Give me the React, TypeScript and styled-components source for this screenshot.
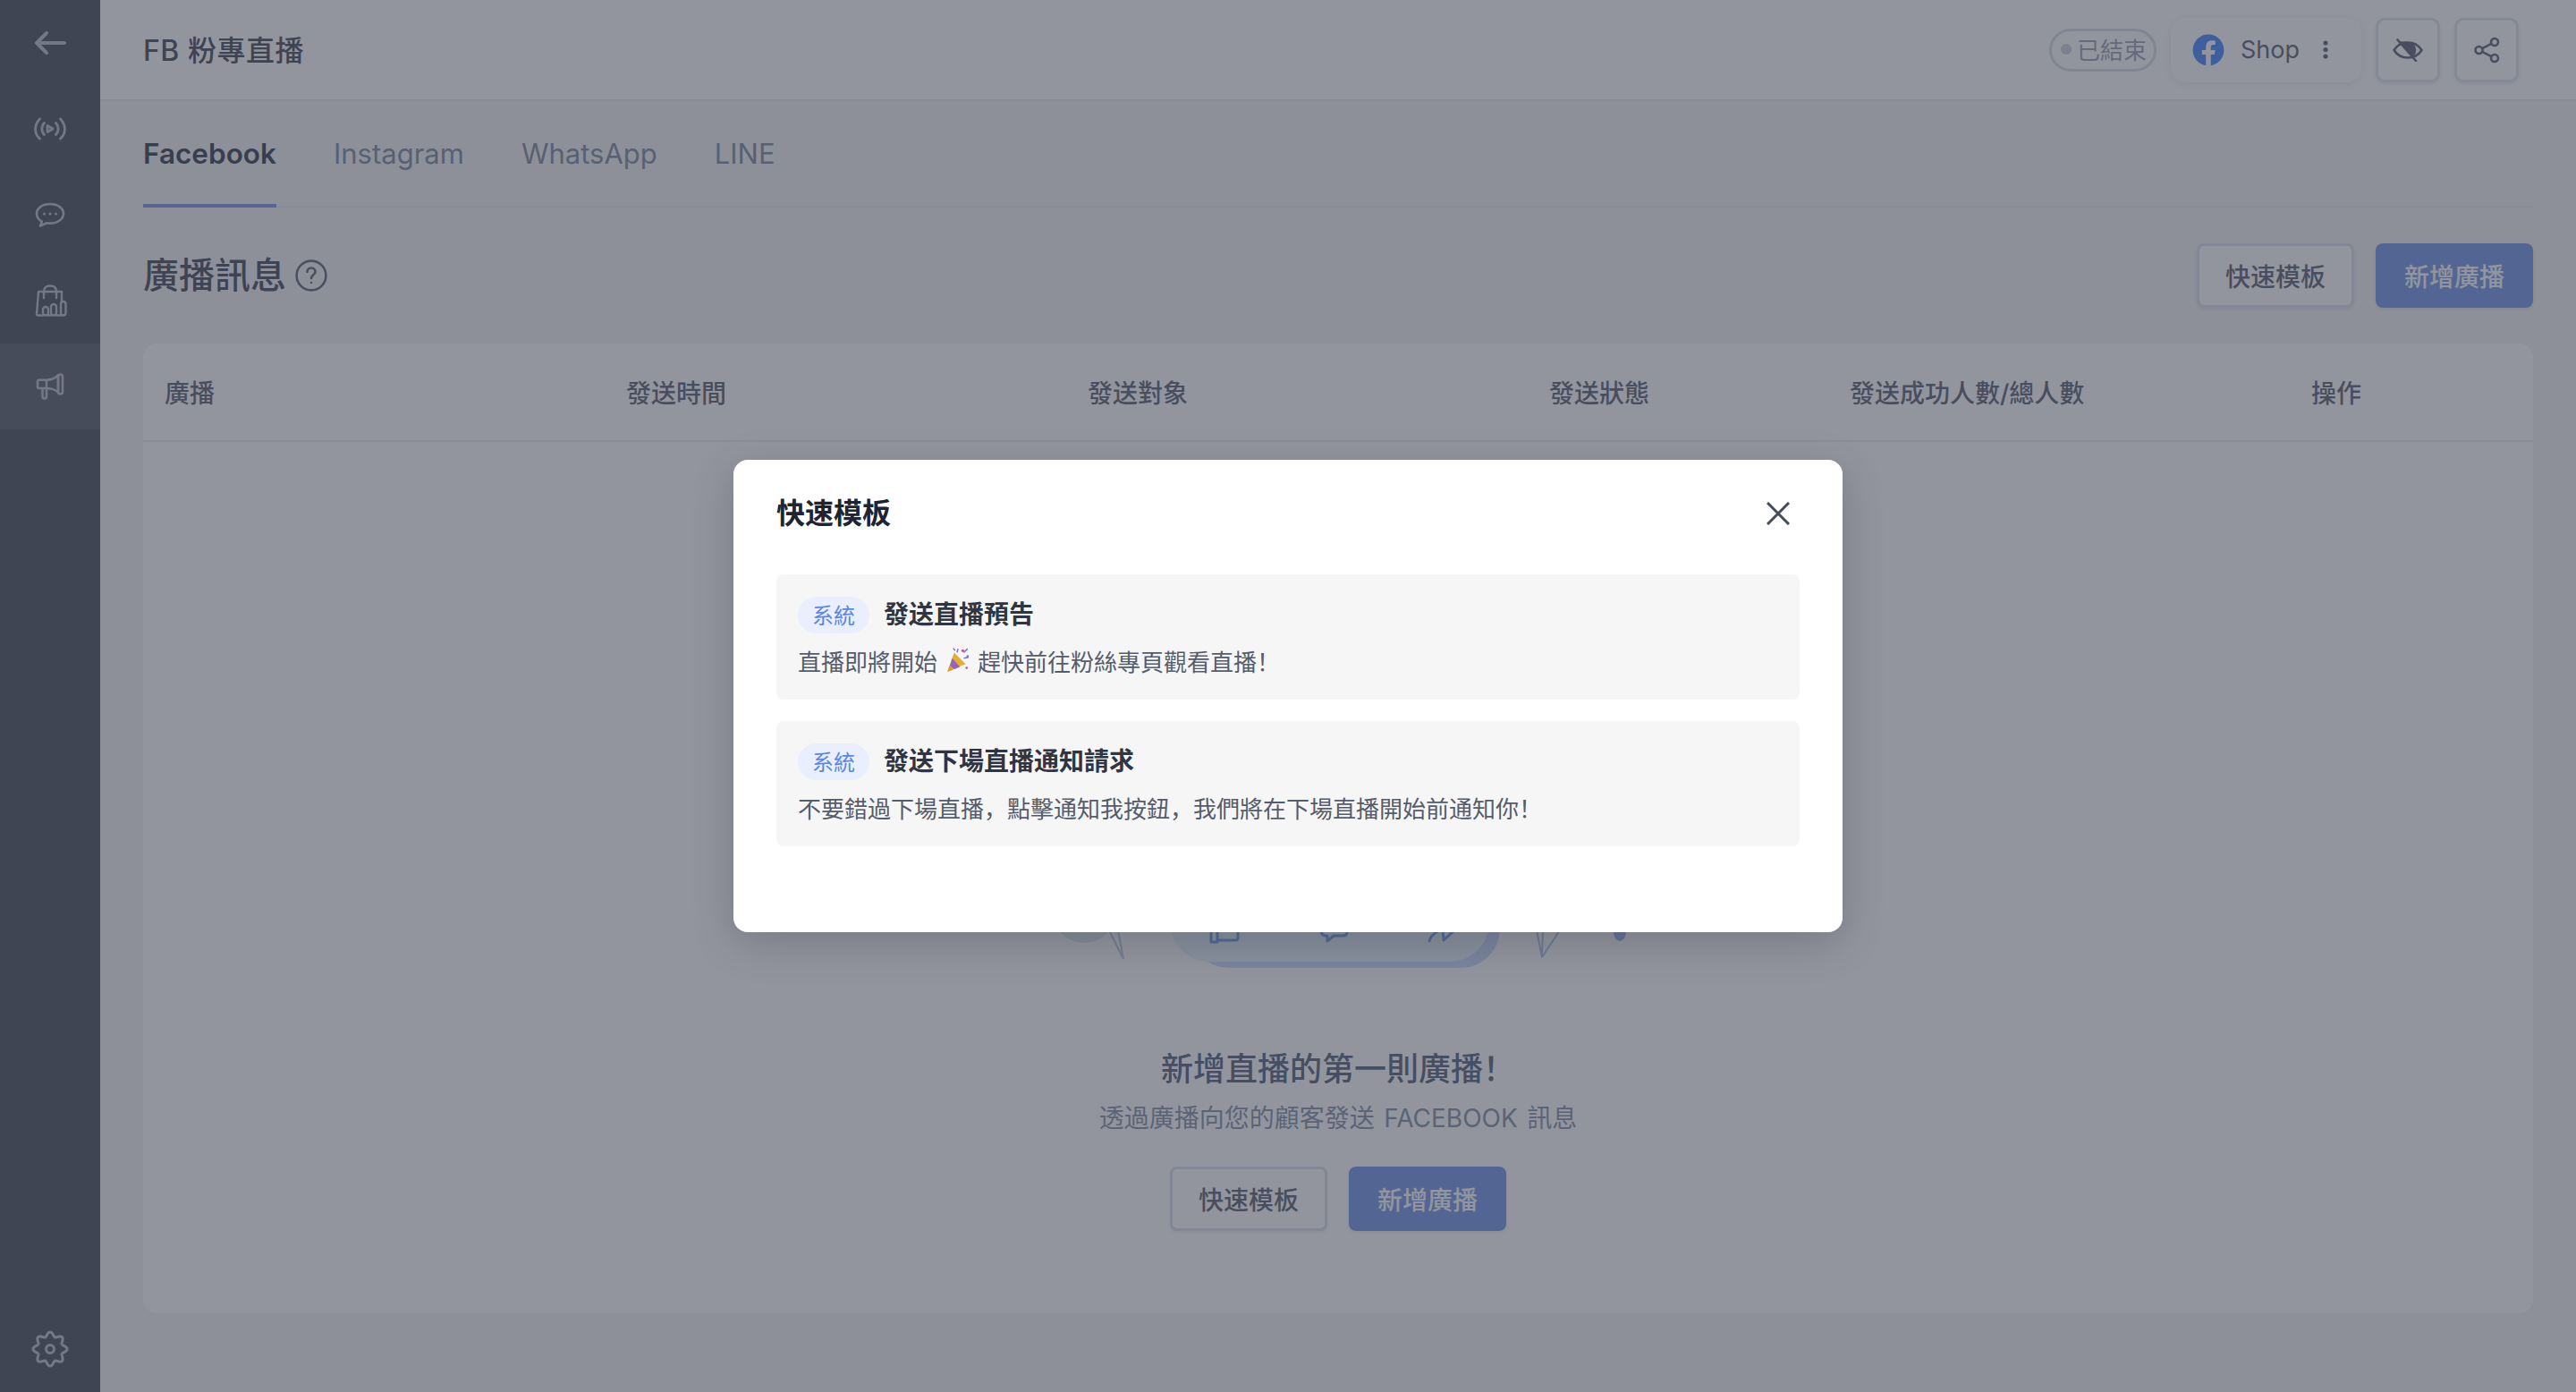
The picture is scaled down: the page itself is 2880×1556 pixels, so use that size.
import React from "react";
import styled, { createGlobalStyle } from "styled-components";
import { FaFacebook } from "react-icons/fa";

const Global = createGlobalStyle`
  html, body { margin: 0; padding: 0; width: 2880px; height: 1556px; overflow: hidden; }
  body { font-family: Inter, "Noto Sans CJK SC", "Noto Sans CJK TC", sans-serif; background: #f5f5f5; }
  * { box-sizing: border-box; }
`;

const Shell = styled.div`
  display: flex;
  width: 2880px;
  height: 1556px;
  position: relative;
`;
const Sidebar = styled.nav`
  width: 112px;
  flex: none;
  background: #5b5f69;
  display: flex;
  flex-direction: column;
`;
const NavItem = styled.div<{ $active?: boolean; $bottom?: boolean }>`
  height: 96px;
  display: flex;
  align-items: center;
  justify-content: center;
  background: ${(p) => (p.$active ? "#696d77" : "transparent")};
  margin-top: ${(p) => (p.$bottom ? "auto" : "0")};
  color: #c1c5d1;
`;
const Main = styled.div`
  flex: 1;
  display: flex;
  flex-direction: column;
  min-width: 0;
`;
const Header = styled.header`
  height: 113px;
  flex: none;
  background: #fff;
  border-bottom: 2px solid #eceef3;
  padding: 0 64px 0 48px;
  display: flex;
  align-items: center;
  justify-content: space-between;
`;
const PageTitle = styled.h1`
  margin: 0 0 3px;
  font-size: 32px;
  font-weight: 500;
  letter-spacing: 0.5px;
  color: #575d6b;
`;
const HeaderActions = styled.div`
  display: flex;
  align-items: center;
  gap: 16px;
`;
const StatusPill = styled.div`
  width: 120px;
  height: 48px;
  border: 3px solid #dcdfe7;
  border-radius: 24px;
  display: flex;
  align-items: center;
  justify-content: flex-start;
  gap: 6px;
  padding: 0 0 2px 10px;
  font-size: 26px;
  color: #a3a9b8;
`;
const StatusDot = styled.span`
  width: 12px;
  height: 12px;
  border-radius: 50%;
  background: #d3d7e0;
`;
const ShopCard = styled.div`
  width: 213px;
  height: 72px;
  border-radius: 16px;
  background: #fff;
  box-shadow: 0 2px 10px rgba(60, 70, 100, 0.1);
  display: flex;
  align-items: center;
  padding-left: 24px;
  color: #6b7180;
  font-size: 27px;
`;
const ShopName = styled.span`
  margin-left: 18px;
  margin-right: 26px;
`;
const SquareButton = styled.button`
  width: 72px;
  height: 72px;
  border: 3px solid #e4e6ee;
  border-radius: 10px;
  background: #fff;
  display: flex;
  align-items: center;
  justify-content: center;
  padding: 0;
  box-shadow: 0 2px 4px rgba(60, 70, 100, 0.1);
`;
const Content = styled.div`
  padding: 0 48px;
  display: flex;
  flex-direction: column;
`;
const Tabs = styled.div`
  height: 119px;
  display: flex;
  gap: 64px;
  border-bottom: 2px solid #eaecf1;
  margin-bottom: 40px;
`;
const Tab = styled.div<{ $active?: boolean }>`
  height: 119px;
  display: flex;
  align-items: center;
  font-size: ${(p) => (p.$active ? "31.5px" : "31px")};
  font-weight: ${(p) => (p.$active ? 600 : 400)};
  color: ${(p) => (p.$active ? "#4b515f" : "#8b95a9")};
  border-bottom: 4px solid ${(p) => (p.$active ? "#81a1e9" : "transparent")};
  padding-top: 2px;
`;
const SectionRow = styled.div`
  height: 72px;
  display: flex;
  align-items: center;
  justify-content: space-between;
  margin-bottom: 40px;
`;
const SectionTitle = styled.h2`
  margin: 0;
  display: flex;
  align-items: center;
  gap: 10px;
  font-size: 40px;
  line-height: 48px;
  padding-bottom: 1px;
  font-weight: 500;
  color: #575d6b;
`;
const ButtonGroup = styled.div`
  display: flex;
  gap: 24px;
`;
const Button = styled.button<{ $primary?: boolean }>`
  width: 176px;
  height: 72px;
  padding: 0 0 1px;
  border-radius: 8px;
  font-family: inherit;
  font-size: 28px;
  font-weight: 500;
  border: ${(p) => (p.$primary ? "none" : "3px solid #e0e3ec")};
  background: ${(p) => (p.$primary ? "#81a1e9" : "#fff")};
  color: ${(p) => (p.$primary ? "#fff" : "#6b7180")};
  box-shadow: 0 2px 4px rgba(60, 70, 100, 0.1);
`;
const TableCard = styled.section`
  height: 1084px;
  background: #fff;
  border-radius: 16px;
  display: flex;
  flex-direction: column;
  align-items: stretch;
`;
const TableHead = styled.div`
  height: 110px;
  border-bottom: 2px solid #eceef3;
  padding: 0 0 1px 24px;
  display: grid;
  grid-template-columns: 516px 516px 516px 336px 516px 1fr;
  align-items: center;
  font-size: 28px;
  font-weight: 500;
  color: #6b7180;
`;
const EmptyBody = styled.div`
  display: flex;
  flex-direction: column;
  align-items: center;
  padding-top: 228px;
`;
const Art = styled.svg`
  display: block;
  width: 660px;
  height: 360px;
  margin-left: 20px;
`;
const EmptyTitle = styled.div`
  margin-top: 89px;
  font-size: 36px;
  line-height: 48px;
  font-weight: 500;
  color: #657087;
`;
const EmptySub = styled.div`
  margin-top: 11px;
  font-size: 28px;
  line-height: 40px;
  word-spacing: 2.5px;
  color: #919bb0;
`;
const EmptyActions = styled(ButtonGroup)`
  margin-top: 34px;
`;
const Backdrop = styled.div`
  position: absolute;
  inset: 0;
  background: rgba(37, 43, 61, 0.5);
  display: flex;
  align-items: center;
  justify-content: center;
`;
const Modal = styled.div`
  width: 1240px;
  height: 528px;
  background: #fff;
  border-radius: 16px;
  padding: 0 48px;
  box-shadow: 0 12px 48px rgba(0, 0, 0, 0.18);
`;
const ModalHead = styled.div`
  height: 128px;
  display: flex;
  align-items: center;
  justify-content: space-between;
  padding: 0 11px 9px 0;
`;
const ModalTitle = styled.h3`
  margin: 0 0 5px;
  font-size: 32px;
  font-weight: 600;
  color: #1f2430;
`;
const TemplateList = styled.div`
  display: flex;
  flex-direction: column;
  gap: 24px;
`;
const TemplateItem = styled.div`
  height: 140px;
  background: #f6f6f7;
  border-radius: 8px;
  padding: 25px 24px 0;
`;
const TemplateHead = styled.div`
  display: flex;
  align-items: center;
  gap: 16px;
  height: 41px;
`;
const SystemTag = styled.span`
  width: 80px;
  height: 41px;
  border-radius: 21px;
  background: #e9effe;
  color: #5b85e8;
  font-size: 24px;
  padding-bottom: 2px;
  display: flex;
  align-items: center;
  justify-content: center;
`;
const TemplateName = styled.span`
  font-size: 28px;
  font-weight: 600;
  color: #2f3542;
  padding-bottom: 5px;
`;
const TemplateText = styled.div`
  margin-top: 12px;
  height: 36px;
  display: flex;
  align-items: center;
  font-size: 26px;
  color: #555c6b;
  white-space: pre;
`;

const BackIcon = () => (
  <svg width="36" height="26" viewBox="0 0 36 26" fill="none" stroke="currentColor" strokeWidth="4" strokeLinecap="round" strokeLinejoin="round">
    <path d="M34 13H3M14 2 3 13l11 11" />
  </svg>
);
const LiveIcon = () => (
  <svg width="36" height="26" viewBox="0 0 36 26" fill="none" stroke="currentColor" strokeWidth="2.8" strokeLinecap="round" strokeLinejoin="round">
    <path d="M6.5 2C.5 8-.5 18 6.5 24M29.5 2c6 6 7 16 0 22M11.5 6.5c-3.5 3.500-3.500 9.500 0 13M24.500 6.500c3.500 3.500 3.500 9.500 0 13" />
    <path d="M15 9.500v7l6-3.500z" />
  </svg>
);
const ChatIcon = () => (
  <svg width="34" height="29" viewBox="0 0 34 29" fill="none" stroke="currentColor" strokeWidth="2.6" strokeLinecap="round" strokeLinejoin="round">
    <path d="M17 2C8.700 2 2 6.700 2 12.800c0 4 2.900 7.200 5.800 8.900L6 26.500l7.500-3.200c1 .2 2.300.3 3.500.3 8.300 0 15-4.700 15-10.800S25.300 2 17 2z" />
    <circle cx="10.500" cy="13" r="1.500" fill="currentColor" stroke="none" />
    <circle cx="17" cy="13" r="1.500" fill="currentColor" stroke="none" />
    <circle cx="23.500" cy="13" r="1.500" fill="currentColor" stroke="none" />
  </svg>
);
const BagIcon = () => (
  <svg width="38" height="36" viewBox="0 0 38 36" fill="none" stroke="currentColor" strokeWidth="2.400" strokeLinecap="round" strokeLinejoin="round">
    <path d="M12 15V7.500C12 3.500 15 1.500 19 1.500S26 3.500 26 7.500V15" />
    <path d="M32 18V8H6L4 33c0 1 .5 1.500 1.500 1.500H11" />
    <rect x="11" y="25" width="6" height="9.500" rx="3" />
    <rect x="20" y="22" width="6" height="12.500" rx="3" />
    <rect x="31" y="19" width="5.500" height="15.500" rx="2.750" />
    <path d="M17 34.500h3M26 34.500h5" />
  </svg>
);
const MegaphoneIcon = () => (
  <svg width="32" height="30" viewBox="0 0 32 30" fill="none" stroke="currentColor" strokeWidth="2.600" strokeLinecap="round" strokeLinejoin="round">
    <path d="M2 9.500c0-1 .8-1.800 1.800-1.800H12c5 0 10-2.400 13-5.200v19c-3-2.500-8-4.500-13-4.500H3.800c-1 0-1.800-.8-1.800-1.800z" />
    <rect x="25" y="1.500" width="5" height="22" rx="2.500" />
    <path d="M12 8v9M7.500 17.500V26c0 1.500 1 2.500 2.200 2.500s2.300-1 2.300-2.500v-8.500" />
  </svg>
);
const gearPath = () => {
  const pts: string[] = [];
  for (let i = 0; i < 160; i++) {
    const t = (i / 160) * Math.PI * 2;
    const r = 16.6 + 2.4 * Math.cos(8 * t);
    pts.push(`${(21 + r * Math.sin(t)).toFixed(2)} ${(21 - r * Math.cos(t)).toFixed(2)}`);
  }
  return `M${pts.join("L")}Z`;
};
const GearIcon = () => (
  <svg width="42" height="42" viewBox="0 0 42 42" fill="none" stroke="currentColor" strokeWidth="3" strokeLinejoin="round">
    <path d={gearPath()} />
    <circle cx="21" cy="21" r="4.500" />
  </svg>
);
const HelpIcon = () => (
  <svg width="36" height="36" viewBox="0 0 36 36" fill="none" stroke="#6f7585" strokeWidth="2.600" strokeLinecap="round">
    <circle cx="18" cy="18" r="16.400" />
    <path d="M13.500 14c0-2.700 2-4.500 4.500-4.500s4.500 1.800 4.500 4.200c0 3.500-4.500 3.500-4.500 7.300" />
    <circle cx="18" cy="26" r="1.300" fill="#6f7585" stroke="none" />
  </svg>
);
const KebabIcon = () => (
  <svg width="6" height="21" viewBox="0 0 6 21" fill="#6b7180">
    <circle cx="3" cy="3" r="2.600" />
    <circle cx="3" cy="10.500" r="2.600" />
    <circle cx="3" cy="18" r="2.600" />
  </svg>
);
const EyeOffIcon = () => (
  <svg width="34" height="26" viewBox="0 0 34 26" fill="none" stroke="#6b7180" strokeWidth="2.600" strokeLinecap="round" strokeLinejoin="round">
    <path d="M1.500 13C5 7.500 10.500 4.500 17 4.500S29 7.500 32.500 13C29 18.500 23.500 21.500 17 21.500S5 18.500 1.500 13z" />
    <path d="M9.500 4.500 17 5c5 0 8 3.500 8 8 0 2.500-1 4.500-2.500 6z" fill="#6b7180" />
    <path d="M5.500 1.500 26 25" />
  </svg>
);
const ShareIcon = () => (
  <svg width="30" height="30" viewBox="0 0 30 30" fill="none" stroke="#6b7180" strokeWidth="2.600">
    <circle cx="6.500" cy="15" r="4" />
    <circle cx="24" cy="6" r="4" />
    <circle cx="24" cy="24" r="4" />
    <path d="M10 13.200 20.500 7.800M10 16.800l10.500 5.400" />
  </svg>
);
const CloseIcon = () => (
  <svg width="26" height="26" viewBox="0 0 26 26" fill="none" stroke="#454b59" strokeWidth="3">
    <path d="M1 1l24 24M25 1 1 25" />
  </svg>
);
const PartyIcon = () => (
  <svg width="28" height="30" viewBox="0 0 26 28" style={{ margin: "0 9px 0 8px" }}>
    <path d="M3 26 10 6l12 12z" fill="#e7ae36" />
    <path d="M5.500 19.500 8 12l8 9-6 2.500z" fill="#8757c9" opacity="0.85" />
    <path d="M3 26l2-6 4 4z" fill="#d99a24" />
    <circle cx="19" cy="4" r="1.500" fill="#d4567b" />
    <circle cx="24" cy="10" r="1.300" fill="#5b85e8" />
    <circle cx="23" cy="22" r="1.300" fill="#d4567b" />
    <path d="M9 1.500l2 2.500M14 2l-1 4M24 2l-4 4M20 12l5-1" stroke="#7f6fd6" strokeWidth="1.400" fill="none" />
  </svg>
);

const Illustration = () => (
  <Art viewBox="0 0 660 360" fill="none">
    <ellipse cx="36" cy="300" rx="34" ry="32" fill="#e0ecf1" />
    <path d="M80 350 64 318M80 350l-6-32" stroke="#c3d0e8" strokeWidth="2" />
    <rect x="154" y="60" width="347" height="300" rx="44" fill="#cfdfff" />
    <rect x="132" y="40" width="357" height="313" rx="44" fill="#e9f5ff" />
    <path d="M178 309v22h7v-22M185 329h20c2 0 3-1 3-3v-6" stroke="#85a7ef" strokeWidth="3" strokeLinejoin="round" />
    <path d="M301 320c1 3 3 4 6 4h1v6l7-6h10c3 0 5-1 5-4" stroke="#85a7ef" strokeWidth="3" strokeLinejoin="round" />
    <path d="M433 318c-7 4-11 8-11 13M437 318l1 11 12-11" stroke="#85a7ef" strokeWidth="3" strokeLinejoin="round" />
    <path d="M548 348l-6-30M548 348l1-30M548 348l21-32" stroke="#b5c8ee" strokeWidth="2" />
    <ellipse cx="635" cy="320" rx="7" ry="10" fill="#a6bdf0" />
  </Art>
);

const columns = ["廣播", "發送時間", "發送對象", "發送狀態", "發送成功人數/總人數", "操作"];

export default function App() {
  return (
    <Shell>
      <Global />
      <Sidebar>
        <NavItem><BackIcon /></NavItem>
        <NavItem><LiveIcon /></NavItem>
        <NavItem><ChatIcon /></NavItem>
        <NavItem><BagIcon /></NavItem>
        <NavItem $active><MegaphoneIcon /></NavItem>
        <NavItem $bottom><GearIcon /></NavItem>
      </Sidebar>
      <Main>
        <Header>
          <PageTitle>FB 粉專直播</PageTitle>
          <HeaderActions>
            <StatusPill><StatusDot />已結束</StatusPill>
            <ShopCard>
              <FaFacebook size={36} color="#5890ff" />
              <ShopName>Shop</ShopName>
              <KebabIcon />
            </ShopCard>
            <SquareButton><EyeOffIcon /></SquareButton>
            <SquareButton><ShareIcon /></SquareButton>
          </HeaderActions>
        </Header>
        <Content>
          <Tabs>
            <Tab $active>Facebook</Tab>
            <Tab>Instagram</Tab>
            <Tab>WhatsApp</Tab>
            <Tab>LINE</Tab>
          </Tabs>
          <SectionRow>
            <SectionTitle>廣播訊息<HelpIcon /></SectionTitle>
            <ButtonGroup>
              <Button>快速模板</Button>
              <Button $primary>新增廣播</Button>
            </ButtonGroup>
          </SectionRow>
          <TableCard>
            <TableHead>
              {columns.map((c) => <div key={c}>{c}</div>)}
            </TableHead>
            <EmptyBody>
              <Illustration />
              <EmptyTitle>新增直播的第一則廣播！</EmptyTitle>
              <EmptySub>透過廣播向您的顧客發送 FACEBOOK 訊息</EmptySub>
              <EmptyActions>
                <Button>快速模板</Button>
                <Button $primary>新增廣播</Button>
              </EmptyActions>
            </EmptyBody>
          </TableCard>
        </Content>
      </Main>
      <Backdrop>
        <Modal>
          <ModalHead>
            <ModalTitle>快速模板</ModalTitle>
            <CloseIcon />
          </ModalHead>
          <TemplateList>
            <TemplateItem>
              <TemplateHead>
                <SystemTag>系統</SystemTag>
                <TemplateName>發送直播預告</TemplateName>
              </TemplateHead>
              <TemplateText>直播即將開始<PartyIcon />趕快前往粉絲專頁觀看直播！</TemplateText>
            </TemplateItem>
            <TemplateItem>
              <TemplateHead>
                <SystemTag>系統</SystemTag>
                <TemplateName>發送下場直播通知請求</TemplateName>
              </TemplateHead>
              <TemplateText>不要錯過下場直播，點擊通知我按鈕，我們將在下場直播開始前通知你！</TemplateText>
            </TemplateItem>
          </TemplateList>
        </Modal>
      </Backdrop>
    </Shell>
  );
}
